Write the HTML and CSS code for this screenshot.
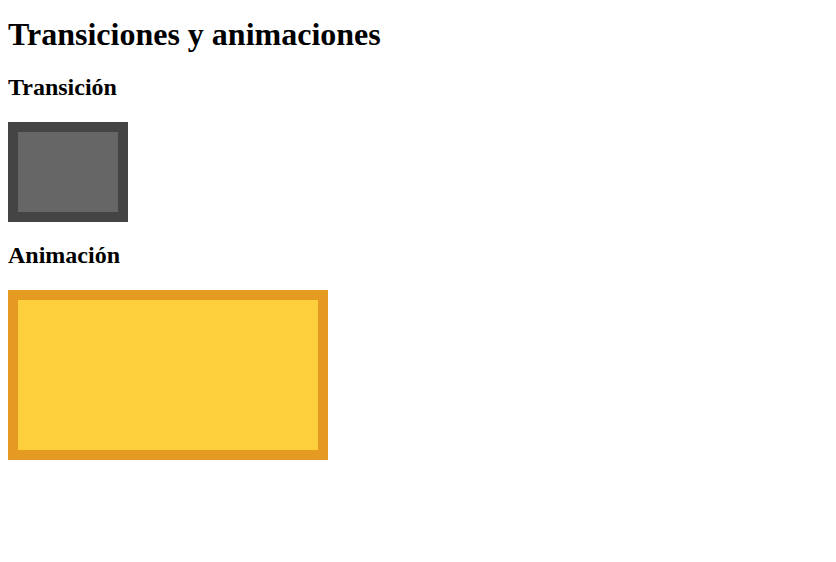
FILE: index.html
```html
<!DOCTYPE html>
<html lang="es">
<head>
<meta charset="utf-8">
<title>Transiciones y animaciones</title>
<link rel="stylesheet" href="styles.css">
</head>
<body>
<h1 class="title">Transiciones y animaciones</h1>
<h2 class="section-title">Transición</h2>
<div class="box box-transition"></div>
<h2 class="section-title">Animación</h2>
<div class="box box-animation"></div>
</body>
</html>
```
FILE: styles.css
```css
body {
  margin: 8px;
  font-family: "Liberation Serif", "Times New Roman", serif;
  color: #000;
  background: #fff;
}
.title {
  font-size: 32px;
  margin: 8px 0 21.44px;
}
.section-title {
  font-size: 24px;
  margin: 20.4px 0;
}
.box {
  border: 10px solid;
}
.box-transition {
  width: 100px;
  height: 80px;
  background: #666666;
  border-color: #444444;
}
.box-animation {
  width: 300px;
  height: 150px;
  background: #fdcf3c;
  border-color: #e59a22;
}
```
